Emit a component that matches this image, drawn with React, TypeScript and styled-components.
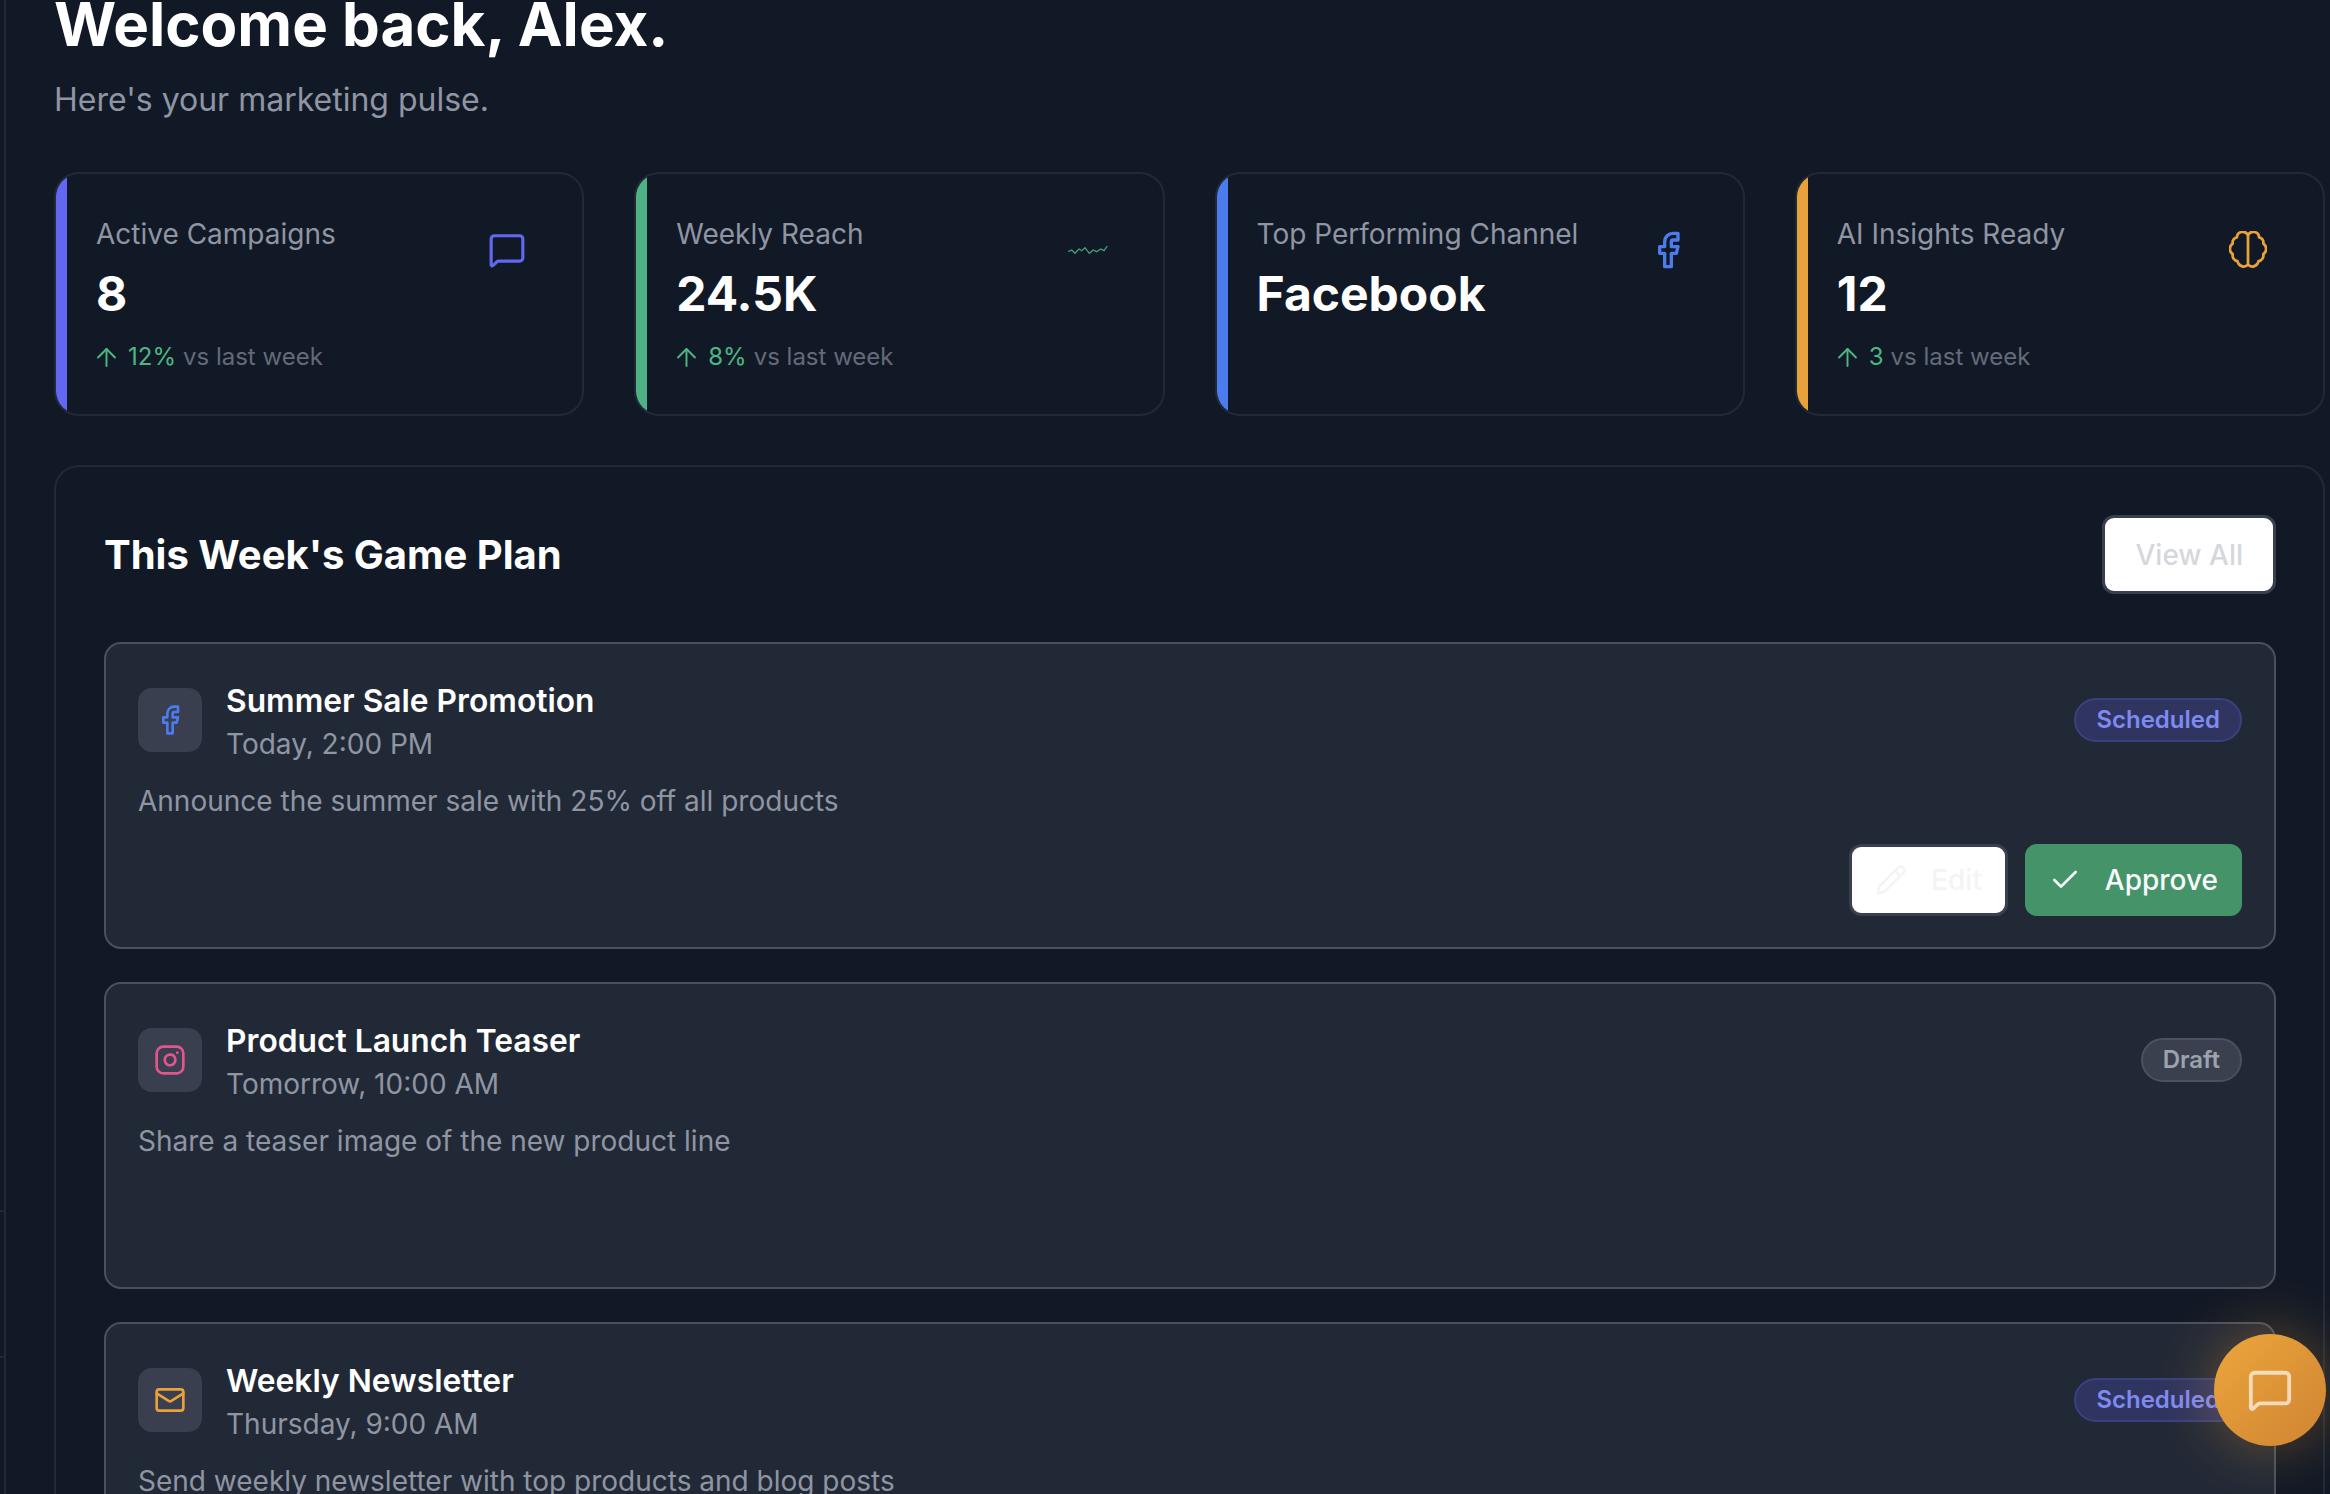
import { ArrowUp, Check, Facebook, Instagram, Mail, MessageSquare, Pencil } from "lucide-react"
import styled, { createGlobalStyle } from "styled-components"

const GlobalStyle = createGlobalStyle`
  html, body {
    margin: 0;
    height: 100%;
    overflow: hidden;
    background: #121926;
  }
  * {
    box-sizing: border-box;
  }
`

const Page = styled.div`
  height: 1494px;
  overflow: hidden;
  display: flex;
  background: #121926;
  font-family: Inter, "Liberation Sans", sans-serif;
  color: #fff;
`

const SideEdge = styled.aside`
  display: flex;
  flex-direction: column;
  width: 6px;
  flex: none;
  border-right: 2px solid #222936;
`

const SideSection = styled.div<{ $height: number }>`
  height: ${(p) => p.$height}px;
  border-bottom: 2px solid #222936;
`

const Main = styled.main`
  flex: 1;
  margin-top: -18px;
  padding: 0 5px 0 48px;
`

const Heading = styled.h1`
  margin: 0;
  font-size: 60px;
  line-height: 84px;
  font-weight: 700;
`

const Subheading = styled.p`
  margin: 11px 0 0;
  font-size: 32px;
  line-height: 46px;
  color: #8f95a3;
`

const StatGrid = styled.div`
  display: grid;
  grid-template-columns: repeat(4, 1fr);
  gap: 50px;
  margin-top: 49px;
`

const StatCard = styled.div<{ $accent: string }>`
  position: relative;
  display: flex;
  justify-content: space-between;
  min-height: 244px;
  padding: 38px 43px 0 40px;
  border: 2px solid #222936;
  border-radius: 25px;
  overflow: hidden;

  &::before {
    content: "";
    position: absolute;
    top: 0;
    bottom: 0;
    left: 0;
    width: 11px;
    background: ${(p) => p.$accent};
  }
`

const StatLabel = styled.div`
  font-size: 28px;
  line-height: 44px;
  color: #8f95a3;
`

const StatValue = styled.div`
  margin-top: 8px;
  font-size: 48px;
  line-height: 60px;
  font-weight: 700;
`

const StatChange = styled.div`
  display: flex;
  align-items: center;
  gap: 7px;
  margin: 15px 0 0 -4px;
  font-size: 24px;
  line-height: 36px;
  color: #646a79;
`

const Up = styled.span`
  color: #4cb782;
`

const StatIcon = styled.div<{ $color: string }>`
  display: flex;
  justify-content: center;
  align-items: center;
  width: 64px;
  height: 45px;
  margin-top: 15px;
  color: ${(p) => p.$color};
`

const Panel = styled.section`
  margin-top: 49px;
  padding: 48px 47px 48px 48px;
  border: 2px solid #222936;
  border-radius: 25px;
`

const PanelHeader = styled.div`
  display: flex;
  justify-content: space-between;
  align-items: center;
`

const PanelTitle = styled.h2`
  margin: 0;
  font-size: 40px;
  font-weight: 700;
`

const GhostButton = styled.button`
  display: flex;
  align-items: center;
  height: 79px;
  padding: 0 30px;
  border: 3px solid #393f4e;
  border-radius: 12px;
  background: #fff;
  color: #d5d7dd;
  font-family: inherit;
  font-size: 28px;
  font-weight: 500;
`

const PlanList = styled.div`
  display: grid;
  grid-auto-rows: 307px;
  gap: 33px;
  margin-top: 48px;
`

const PlanItem = styled.article`
  display: flex;
  flex-direction: column;
  padding: 33px 32px 31px;
  border: 2px solid #4a505e;
  border-radius: 17px;
  background: #222936;
`

const PlanHeader = styled.div`
  display: flex;
  align-items: center;
  gap: 24px;
`

const ChannelIcon = styled.div<{ $color: string }>`
  display: flex;
  justify-content: center;
  align-items: center;
  width: 64px;
  height: 64px;
  flex: none;
  border-radius: 14px;
  background: #393f4e;
  color: ${(p) => p.$color};
`

const PlanText = styled.div`
  flex: 1;
  margin: 3px 0 -3px;
`

const PlanTitle = styled.div`
  font-size: 31.75px;
  line-height: 42px;
  font-weight: 600;
`

const PlanTime = styled.div`
  font-size: 28px;
  line-height: 44px;
  color: #8f95a3;
`

const Badge = styled.span<{ $tone: "indigo" | "gray" }>`
  padding: 0 20px;
  font-size: 24px;
  line-height: 40px;
  font-weight: 600;
  border-radius: 22px;
  color: ${(p) => (p.$tone === "indigo" ? "#7f8af0" : "#9ca3af")};
  background: ${(p) => (p.$tone === "indigo" ? "#2f3560" : "#3a404e")};
  border: 2px solid ${(p) => (p.$tone === "indigo" ? "#3b4080" : "#4b5160")};
`

const PlanDescription = styled.p`
  margin: 16px 0 0;
  font-size: 28px;
  line-height: 44px;
  color: #8f95a3;
`

const PlanActions = styled.div`
  display: flex;
  justify-content: flex-end;
  gap: 17px;
  margin-top: auto;
`

const ActionButton = styled.button<{ $primary?: boolean }>`
  display: flex;
  align-items: center;
  gap: 24px;
  height: 72px;
  padding: 0 ${(p) => (p.$primary ? "24px" : "23px")};
  border: ${(p) => (p.$primary ? "none" : "3px solid #393f4e")};
  border-radius: 12px;
  background: ${(p) => (p.$primary ? "#459469" : "#fff")};
  color: ${(p) => (p.$primary ? "#f9fafb" : "#f3f4f6")};
  font-family: inherit;
  font-size: 28px;
  font-weight: 500;
`

const ChatFab = styled.button`
  position: fixed;
  right: 4px;
  bottom: 48px;
  display: flex;
  justify-content: center;
  align-items: center;
  width: 112px;
  height: 112px;
  border: none;
  border-radius: 50%;
  background: linear-gradient(135deg, #eba63c, #d08432);
  box-shadow: 0 0 60px rgba(245, 166, 60, 0.35);
  color: rgba(255, 255, 255, 0.65);
`

const WaveIcon = () => (
  <svg width="40" height="10" viewBox="0 0 40 10" fill="none" stroke="#4cb782" strokeWidth="1.3" strokeOpacity="0.85">
    <path d="M0.3 6.7L3.7 5L7 8.3L11 4L13.7 5.7L17 2.7L21.3 8.3L25.3 5L28.7 6.7L32.7 4L36 5.7L39.3 1" />
  </svg>
)

const BrainIcon = () => (
  <svg width="38" height="38" viewBox="0 0 36 36" fill="none" stroke="currentColor" strokeWidth="2.6" strokeLinejoin="round">
    <path d="M18 3V33" />
    <path d="M18 4A5.5 5.5 0 0 0 7.5 6A5 5 0 0 0 3.5 12A6 6 0 0 0 3.5 22A5.5 5.5 0 0 0 8 28.5A6 6 0 0 0 18 32" />
    <path d="M18 4A5.5 5.5 0 0 1 28.5 6A5 5 0 0 1 32.5 12A6 6 0 0 1 32.5 22A5.5 5.5 0 0 1 28 28.5A6 6 0 0 1 18 32" />
  </svg>
)

const App = () => {
  return (
    <>
      <GlobalStyle />
      <Page>
        <SideEdge>
          <SideSection $height={1212} />
          <SideSection $height={146} />
        </SideEdge>
        <Main>
          <Heading>Welcome back, Alex.</Heading>
          <Subheading>Here's your marketing pulse.</Subheading>

          <StatGrid>
            <StatCard $accent="#6366f1">
              <div>
                <StatLabel>Active Campaigns</StatLabel>
                <StatValue>8</StatValue>
                <StatChange>
                  <ArrowUp size={29} strokeWidth={1.6} color="#4cb782" />
                  <Up>12%</Up> vs last week
                </StatChange>
              </div>
              <StatIcon $color="#6366f1">
                <MessageSquare size={38} />
              </StatIcon>
            </StatCard>
            <StatCard $accent="#4fb286">
              <div>
                <StatLabel>Weekly Reach</StatLabel>
                <StatValue>24.5K</StatValue>
                <StatChange>
                  <ArrowUp size={29} strokeWidth={1.6} color="#4cb782" />
                  <Up>8%</Up> vs last week
                </StatChange>
              </div>
              <StatIcon $color="#4cb782">
                <WaveIcon />
              </StatIcon>
            </StatCard>
            <StatCard $accent="#4b7bec">
              <div>
                <StatLabel>Top Performing Channel</StatLabel>
                <StatValue>Facebook</StatValue>
              </div>
              <StatIcon $color="#4b7bec">
                <Facebook size={40} />
              </StatIcon>
            </StatCard>
            <StatCard $accent="#e9a23b">
              <div>
                <StatLabel>AI Insights Ready</StatLabel>
                <StatValue>12</StatValue>
                <StatChange>
                  <ArrowUp size={29} strokeWidth={1.6} color="#4cb782" />
                  <Up>3</Up> vs last week
                </StatChange>
              </div>
              <StatIcon $color="#e9a23b">
                <BrainIcon />
              </StatIcon>
            </StatCard>
          </StatGrid>

          <Panel>
            <PanelHeader>
              <PanelTitle>This Week's Game Plan</PanelTitle>
              <GhostButton>View All</GhostButton>
            </PanelHeader>

            <PlanList>
              <PlanItem>
                <PlanHeader>
                  <ChannelIcon $color="#4b7bec">
                    <Facebook size={32} />
                  </ChannelIcon>
                  <PlanText>
                    <PlanTitle>Summer Sale Promotion</PlanTitle>
                    <PlanTime>Today, 2:00 PM</PlanTime>
                  </PlanText>
                  <Badge $tone="indigo">Scheduled</Badge>
                </PlanHeader>
                <PlanDescription>Announce the summer sale with 25% off all products</PlanDescription>
                <PlanActions>
                  <ActionButton>
                    <Pencil size={32} />
                    Edit
                  </ActionButton>
                  <ActionButton $primary>
                    <Check size={32} />
                    Approve
                  </ActionButton>
                </PlanActions>
              </PlanItem>

              <PlanItem>
                <PlanHeader>
                  <ChannelIcon $color="#e1568f">
                    <Instagram size={32} />
                  </ChannelIcon>
                  <PlanText>
                    <PlanTitle>Product Launch Teaser</PlanTitle>
                    <PlanTime>Tomorrow, 10:00 AM</PlanTime>
                  </PlanText>
                  <Badge $tone="gray">Draft</Badge>
                </PlanHeader>
                <PlanDescription>Share a teaser image of the new product line</PlanDescription>
              </PlanItem>

              <PlanItem>
                <PlanHeader>
                  <ChannelIcon $color="#e9a23b">
                    <Mail size={32} />
                  </ChannelIcon>
                  <PlanText>
                    <PlanTitle>Weekly Newsletter</PlanTitle>
                    <PlanTime>Thursday, 9:00 AM</PlanTime>
                  </PlanText>
                  <Badge $tone="indigo">Scheduled</Badge>
                </PlanHeader>
                <PlanDescription>Send weekly newsletter with top products and blog posts</PlanDescription>
              </PlanItem>
            </PlanList>
          </Panel>
        </Main>
        <ChatFab>
          <MessageSquare size={46} />
        </ChatFab>
      </Page>
    </>
  )
}

export default App
